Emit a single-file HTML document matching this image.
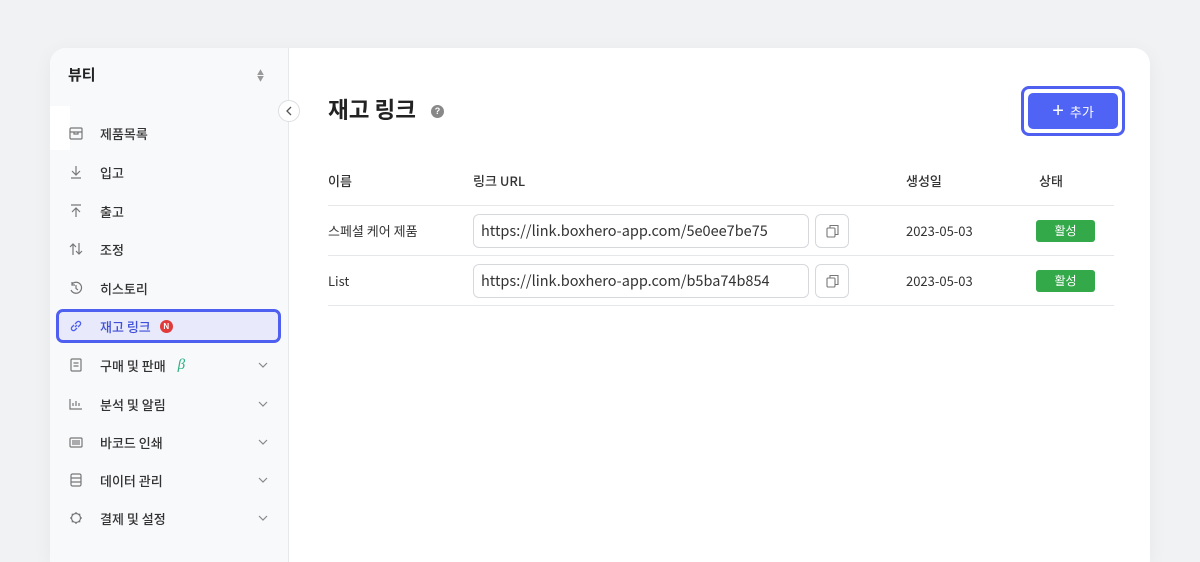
<!DOCTYPE html>
<html><head><meta charset="utf-8"><style>
*{box-sizing:border-box;margin:0;padding:0}
html,body{width:1200px;height:562px;overflow:hidden}
body{background:#f1f2f4;font-family:"Noto Sans CJK KR","Liberation Sans",sans-serif;color:#222;position:relative}
.card{position:absolute;left:50px;top:48px;width:1100px;height:514px;background:#fff;border-radius:16px 16px 0 0;overflow:hidden;box-shadow:0 4px 20px rgba(0,0,0,.05)}
.side{position:absolute;left:0;top:0;width:239px;height:100%;background:#f8f9fb;border-right:1px solid #e6e8ec}
.brand{position:absolute;left:18px;top:16px;font-size:15px;font-weight:bold}
.sort{position:absolute;left:207px;top:22px;font-size:7px;color:#999;line-height:6px}
.item{position:absolute;left:6px;width:225px;height:32px;display:flex;align-items:center;font-size:13px;color:#333;font-weight:500}
.item .ic{width:16px;height:16px;margin-left:12px;margin-right:16px;color:#777;display:flex;align-items:center;justify-content:center}
.item .chev{position:absolute;right:12px;top:10px}
.active{border:3px solid #4f5ff0;border-radius:7px;background:#e8eafc;color:#3f4fd8}
.main{position:absolute;left:240px;top:0;right:0;height:100%}
h1{position:absolute;left:38px;top:45px;font-size:22.5px;font-weight:bold}
.q{position:absolute;left:141px;top:57px;width:13px;height:13px;border-radius:50%;background:#888;color:#fff;font-size:9px;text-align:center;line-height:13px;font-weight:bold;font-family:"Liberation Sans",sans-serif}
.btnwrap{position:absolute;left:731px;top:38px;width:104px;height:50px;border:3px solid #4f5ff0;border-radius:8px;padding:4px}
.btn{width:100%;height:100%;background:#4f63f5;border-radius:5px;color:#fff;font-size:13px;display:flex;align-items:center;justify-content:center;gap:6px}
.th{position:absolute;top:123px;font-size:13px;color:#333;font-weight:500}
.line{position:absolute;left:38px;width:786px;height:1px;background:#e5e7eb}
.cell{position:absolute;font-size:13px;color:#333}
.url{position:absolute;left:183px;width:336px;height:34px;border:1px solid #d6d8dc;border-radius:6px;font-size:14.5px;padding-left:7px;line-height:32px;color:#333}
.copy{position:absolute;left:525px;width:34px;height:34px;border:1px solid #d6d8dc;border-radius:6px;display:flex;align-items:center;justify-content:center}
.badge{position:absolute;left:746px;width:59px;height:22px;background:#34a94a;border-radius:3px;color:#fff;font-size:12px;text-align:center;line-height:22px}
</style></head><body>
<div class="card">
<div class="side">
<div class="brand">뷰티</div>
<div class="sort">▲<br>▼</div>
<div style="position:absolute;left:0;top:58px;width:20px;height:44px;background:#fff"></div>
<div class="item" style="top:69px"><span class="ic"><svg width="14" height="13" viewBox="0 0 14 13" fill="none" stroke="#777" stroke-width="1.2"><rect x="1" y="1" width="12" height="11" rx="1"/><path d="M1 5h12M5 5v2h4V5"/></svg></span>제품목록</div>
<div class="item" style="top:108px"><span class="ic"><svg width="12" height="14" fill="none" stroke="#777" stroke-width="1.2"><path d="M6 1v9M2 6l4 4 4-4M1 13h10"/></svg></span>입고</div>
<div class="item" style="top:147px"><span class="ic"><svg width="12" height="14" fill="none" stroke="#777" stroke-width="1.2"><path d="M6 13V4M2 8l4-4 4 4M1 1h10"/></svg></span>출고</div>
<div class="item" style="top:185px"><span class="ic"><svg width="14" height="14" fill="none" stroke="#777" stroke-width="1.2"><path d="M4 13V2M1 5l3-3 3 3M10 1v11M7 9l3 3 3-3"/></svg></span>조정</div>
<div class="item" style="top:224px"><span class="ic"><svg width="14" height="14" fill="none" stroke="#777" stroke-width="1.2"><path d="M3 3a5.5 5.5 0 1 1-1 6M3 1v3h3M7 4v3.5l2 1.5"/></svg></span>히스토리</div>
<div class="item active" style="top:261px;height:34px"><span class="ic" style="margin-left:9px;color:#4f5ff0"><svg width="14" height="14" fill="none" stroke="#4f5ff0" stroke-width="1.3"><path d="M6 8l2-2M5 6L3 8a2.1 2.1 0 0 0 3 3l2-2M9 8l2-2a2.1 2.1 0 0 0-3-3L6 5"/></svg></span><b style="font-weight:500">재고 링크</b><span style="margin-left:9px;width:13px;height:13px;border-radius:50%;background:#e03a3a;color:#fff;font-size:8px;font-weight:bold;text-align:center;line-height:13px;font-family:'Liberation Sans',sans-serif">N</span></div>
<div class="item" style="top:301px"><span class="ic"><svg width="12" height="14" fill="none" stroke="#777" stroke-width="1.2"><rect x="1" y="1" width="10" height="12" rx="1"/><path d="M3.5 5h5M3.5 8h5"/></svg></span>구매 및 판매<i style="color:#2bb080;margin-left:12px;font-family:'Liberation Serif',serif;font-size:15px">β</i><svg class="chev" width="12" height="12" fill="none" stroke="#888" stroke-width="1.2"><path d="M2 4l4 4 4-4"/></svg></div>
<div class="item" style="top:340px"><span class="ic"><svg width="14" height="12" fill="none" stroke="#777" stroke-width="1.2"><path d="M1 1v10h12M4 8V5M7 8V3M10 8V5"/></svg></span>분석 및 알림<svg class="chev" width="12" height="12" fill="none" stroke="#888" stroke-width="1.2"><path d="M2 4l4 4 4-4"/></svg></div>
<div class="item" style="top:378px"><span class="ic"><svg width="14" height="11" fill="none" stroke="#777" stroke-width="1.2"><rect x="1" y="1" width="12" height="9" rx="1"/><path d="M4 3v5M6 3v5M8 3v5M10 3v5"/></svg></span>바코드 인쇄<svg class="chev" width="12" height="12" fill="none" stroke="#888" stroke-width="1.2"><path d="M2 4l4 4 4-4"/></svg></div>
<div class="item" style="top:416px"><span class="ic"><svg width="12" height="14" fill="none" stroke="#777" stroke-width="1.2"><rect x="1" y="1" width="10" height="12" rx="1.5"/><path d="M1 5h10M1 9h10"/></svg></span>데이터 관리<svg class="chev" width="12" height="12" fill="none" stroke="#888" stroke-width="1.2"><path d="M2 4l4 4 4-4"/></svg></div>
<div class="item" style="top:454px"><span class="ic"><svg width="14" height="14" fill="none" stroke="#777" stroke-width="1.2"><circle cx="7" cy="7" r="4.5"/><path d="M7 1v1.5M7 11.5V13M1 7h1.5M11.5 7H13M2.8 2.8l1 1M10.2 10.2l1 1M2.8 11.2l1-1M10.2 3.8l1-1"/></svg></span>결제 및 설정<svg class="chev" width="12" height="12" fill="none" stroke="#888" stroke-width="1.2"><path d="M2 4l4 4 4-4"/></svg></div>
</div>
<div style="position:absolute;left:228px;top:52px;width:22px;height:22px;border-radius:50%;background:#fff;border:1px solid #dcdee2;display:flex;align-items:center;justify-content:center"><svg width="8" height="10" fill="none" stroke="#555" stroke-width="1.3"><path d="M6 1L2 5l4 4"/></svg></div>
<div class="main">
<h1>재고 링크</h1><div class="q">?</div>
<div class="btnwrap"><div class="btn"><span style="font-size:20px;font-weight:300;line-height:1;font-family:'Liberation Sans',sans-serif">+</span>추가</div></div>
<div class="th" style="left:38px">이름</div>
<div class="th" style="left:183px">링크 URL</div>
<div class="th" style="left:616px">생성일</div>
<div class="th" style="left:749px">상태</div>
<div class="line" style="top:157px"></div>
<div class="cell" style="left:38px;top:173px">스페셜 케어 제품</div>
<div class="url" style="top:166px">https://link.boxhero-app.com/5e0ee7be75</div>
<div class="copy" style="top:166px"><svg width="13" height="14" fill="none" stroke="#777" stroke-width="1.1"><rect x="1" y="4" width="8" height="9" rx="1"/><path d="M4 4V1.5h8v9H9"/></svg></div>
<div class="cell" style="left:616px;top:173px">2023-05-03</div>
<div class="badge" style="top:172px">활성</div>
<div class="line" style="top:207px"></div>
<div class="cell" style="left:38px;top:223px">List</div>
<div class="url" style="top:216px">https://link.boxhero-app.com/b5ba74b854</div>
<div class="copy" style="top:216px"><svg width="13" height="14" fill="none" stroke="#777" stroke-width="1.1"><rect x="1" y="4" width="8" height="9" rx="1"/><path d="M4 4V1.5h8v9H9"/></svg></div>
<div class="cell" style="left:616px;top:223px">2023-05-03</div>
<div class="badge" style="top:222px">활성</div>
<div class="line" style="top:257px"></div>
</div>
</div>
</body></html>
